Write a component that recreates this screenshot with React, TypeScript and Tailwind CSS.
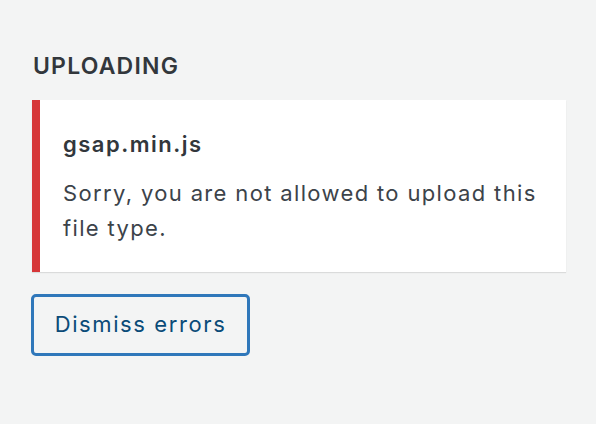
export default function App() {
  return (
    <div className="w-[596px] h-[424px] bg-[#f3f4f4] pt-[52px] pl-[32px] pr-[30px]" style={{ fontFamily: 'Inter, "Noto Sans", sans-serif' }}>
      <h2 className="text-[23px] leading-[28px] font-semibold tracking-[1.2px] text-[#32373c] pl-[1px]">UPLOADING</h2>
      <div className="mt-[20px] h-[172px] bg-white border-l-[8px] border-[#d63638] shadow-[0_1px_1px_rgba(0,0,0,0.1)] pl-[23px] pr-[20px] pt-[30px]">
        <div className="text-[22px] leading-[28px] font-semibold tracking-[1.5px] text-[#32373c]">gsap.min.js</div>
        <div className="mt-[18px] text-[22px] leading-[35px] tracking-[1.35px] text-[#3c434a]">Sorry, you are not allowed to upload this file type.</div>
      </div>
      <button className="mt-[22px] -ml-[1px] w-[219px] h-[62px] rounded-[5px] border-[3px] border-[#2f77ba] bg-[#f3f4f4] text-[22px] tracking-[1.6px] text-[#0a4b78] flex items-center justify-center pb-[1px]">Dismiss errors</button>
    </div>
  );
}
